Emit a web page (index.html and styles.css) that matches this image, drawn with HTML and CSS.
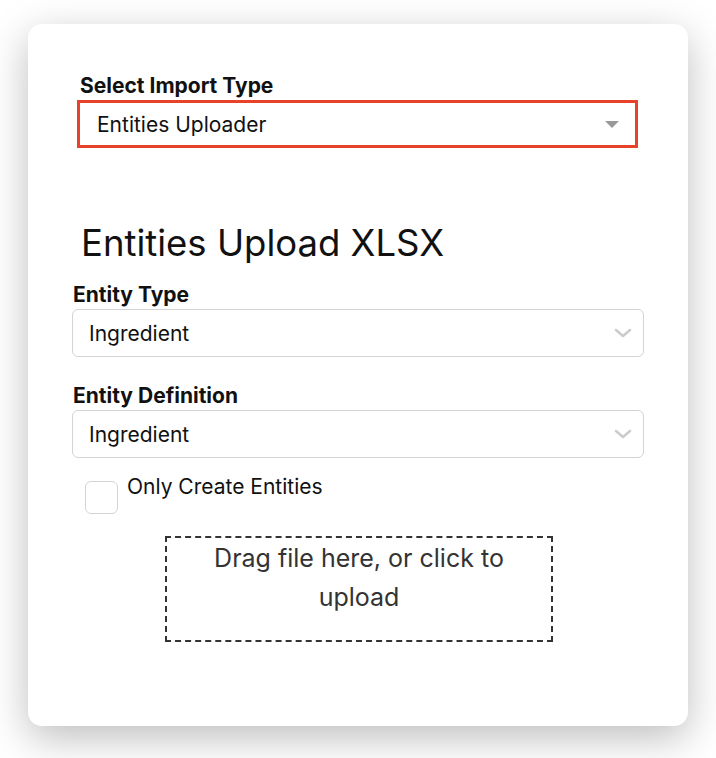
FILE: index.html
```html
<!DOCTYPE html>
<html>
<head>
<meta charset="utf-8">
<link rel="stylesheet" href="styles.css">
</head>
<body>
<div class="card">
  <div class="import">
    <div class="import-label">Select Import Type</div>
    <div class="import-select">
      <span>Entities Uploader</span>
      <span class="tri"></span>
    </div>
  </div>
  <h1 class="title">Entities Upload XLSX</h1>
  <div class="field">
    <div class="label">Entity Type</div>
    <div class="select">
      <span>Ingredient</span>
      <svg class="chev" width="18" height="10" viewBox="0 0 18 10"><path d="M2 2 L9 8 L16 2" fill="none" stroke="#cccccc" stroke-width="2.6" stroke-linecap="round" stroke-linejoin="round"/></svg>
    </div>
  </div>
  <div class="field field-2">
    <div class="label">Entity Definition</div>
    <div class="select">
      <span>Ingredient</span>
      <svg class="chev" width="18" height="10" viewBox="0 0 18 10"><path d="M2 2 L9 8 L16 2" fill="none" stroke="#cccccc" stroke-width="2.6" stroke-linecap="round" stroke-linejoin="round"/></svg>
    </div>
  </div>
  <div class="check-row">
    <span class="checkbox"></span>
    <span class="check-label">Only Create Entities</span>
  </div>
  <div class="drop">Drag file here, or click to upload</div>
</div>
</body>
</html>
```
FILE: styles.css
```css
html, body {
  margin: 0;
  padding: 0;
  background: #ffffff;
}
body {
  font-family: Inter, "Noto Sans", sans-serif;
  color: #111111;
  padding: 24px 28px 0 28px;
  min-height: 758px;
  box-sizing: border-box;
}
.card {
  width: 660px;
  height: 702px;
  box-sizing: border-box;
  background: #fff;
  border-radius: 14px;
  box-shadow: 0 12px 40px rgba(0,0,0,0.26);
  padding: 50px 44px 0 44px;
}
.import {
  margin-left: 5px;
  width: 561px;
}
.import-label {
  font-weight: 700;
  font-size: 21px;
  line-height: 24px;
  margin-left: 3px;
  color: #111;
}
.import-select {
  margin-top: 2px;
  height: 48px;
  box-sizing: border-box;
  border: 3px solid #e8432a;
  display: flex;
  align-items: center;
  justify-content: space-between;
  padding: 0 16px 0 17px;
  font-size: 21px;
  color: #111;
}
.tri {
  width: 0;
  height: 0;
  border-left: 7px solid transparent;
  border-right: 7px solid transparent;
  border-top: 7px solid #999;
  margin-top: 1px;
}
.title {
  margin: 73px 0 0 9px;
  font-size: 36.5px;
  font-weight: 400;
  line-height: 44px;
  color: #111;
}
.field {
  margin-top: 18px;
}
.field-2 {
  margin-top: 27px;
}
.label {
  font-weight: 700;
  font-size: 21px;
  line-height: 24px;
  margin-left: 1px;
}
.select {
  margin-top: 2px;
  height: 48px;
  box-sizing: border-box;
  border: 1px solid #d4d4d4;
  border-radius: 6px;
  display: flex;
  align-items: center;
  justify-content: space-between;
  padding: 0 11px 0 16px;
  font-size: 21px;
}
.chev {
  display: block;
}
.check-row {
  display: flex;
  align-items: flex-start;
  margin: 23px 0 0 13px;
}
.checkbox {
  width: 33px;
  height: 33px;
  box-sizing: border-box;
  border: 1px solid #d4d4d4;
  border-radius: 6px;
}
.check-label {
  font-size: 21px;
  line-height: 24px;
  margin-left: 9px;
  margin-top: -6px;
}
.drop {
  margin: 22px 0 0 93px;
  width: 388px;
  height: 106px;
  box-sizing: border-box;
  border: 2px dashed #333;
  text-align: center;
  font-size: 25px;
  line-height: 39px;
  color: #333;
  padding: 1px 30px 0 30px;
}
```
